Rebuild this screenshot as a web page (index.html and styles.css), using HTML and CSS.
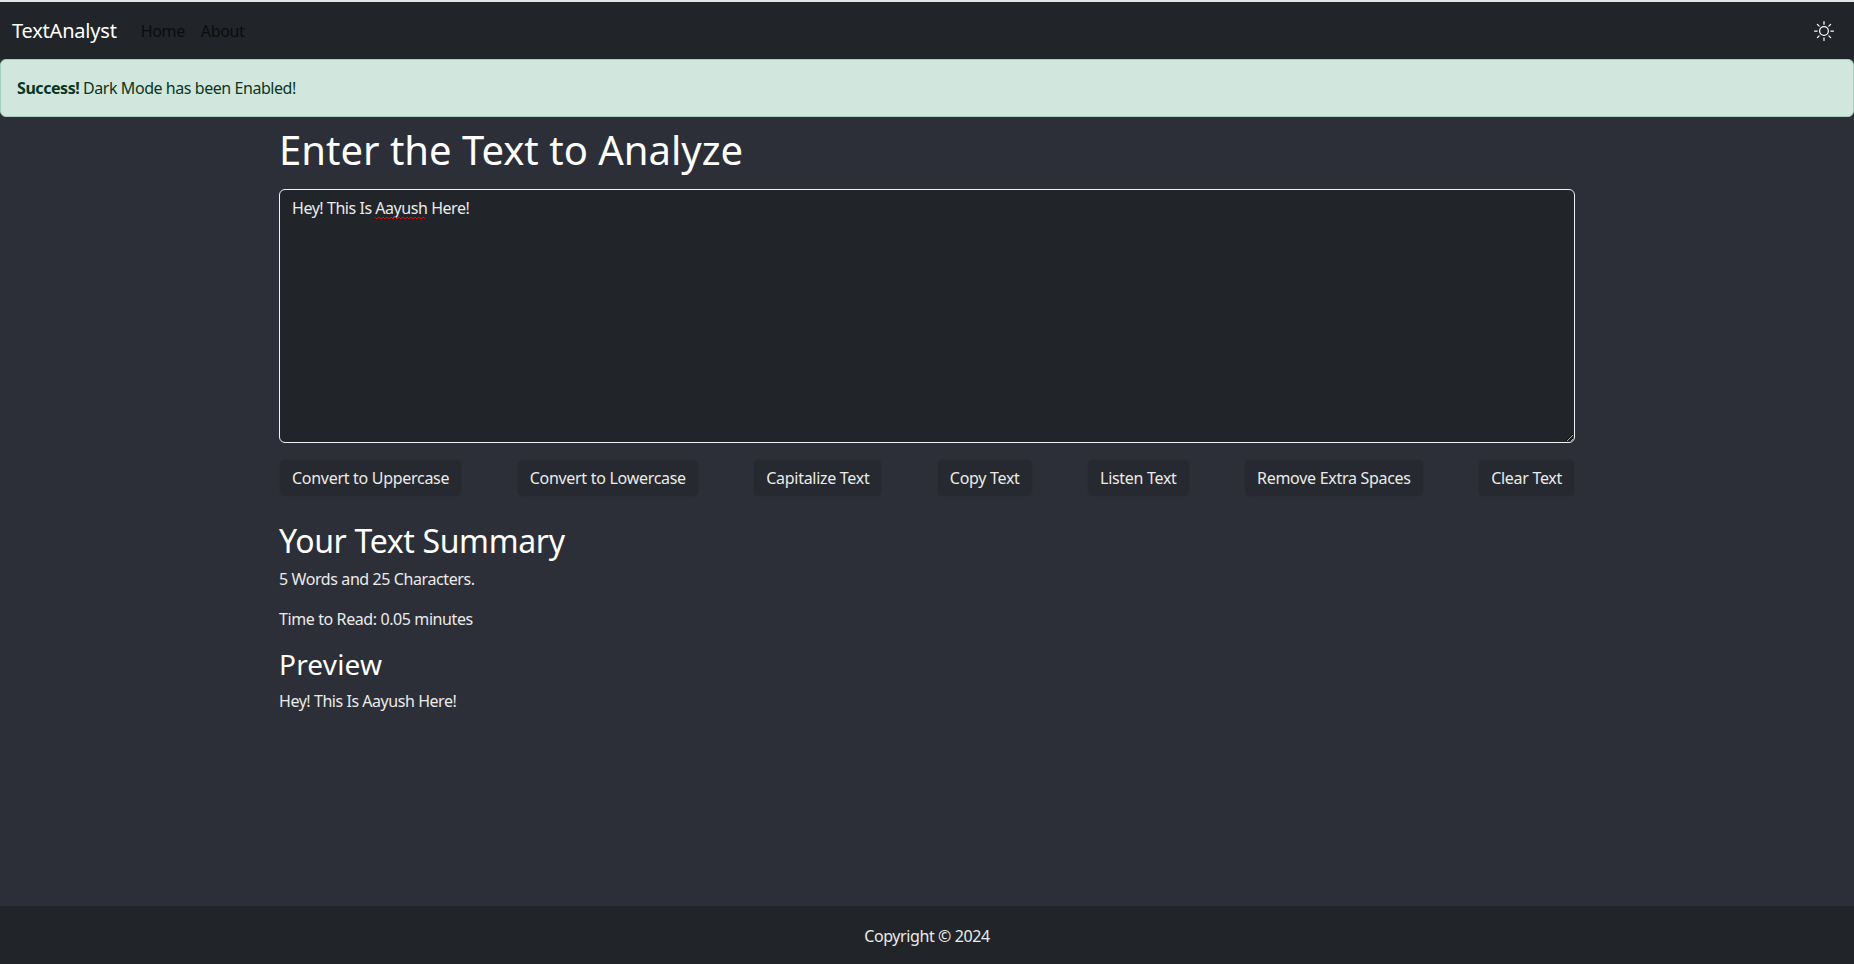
FILE: index.html
```html
<!DOCTYPE html>
<html lang="en">
<head>
<meta charset="UTF-8">
<meta name="viewport" content="width=device-width, initial-scale=1.0">
<title>TextAnalyst</title>
<link rel="stylesheet" href="styles.css">
</head>
<body>
    <nav class="navbar">
        <a class="brand" href="#">TextAnalyst</a>
        <a class="nav-link" href="#">Home</a>
        <a class="nav-link" href="#">About</a>
        <svg class="theme-icon" viewBox="0 0 16 16" fill="currentColor" aria-label="Toggle dark mode">
            <path d="M8 11a3 3 0 1 1 0-6 3 3 0 0 1 0 6zm0 1a4 4 0 1 0 0-8 4 4 0 0 0 0 8zM8 0a.5.5 0 0 1 .5.5v2a.5.5 0 0 1-1 0v-2A.5.5 0 0 1 8 0zm0 13a.5.5 0 0 1 .5.5v2a.5.5 0 0 1-1 0v-2A.5.5 0 0 1 8 13zm8-5a.5.5 0 0 1-.5.5h-2a.5.5 0 0 1 0-1h2a.5.5 0 0 1 .5.5zM3 8a.5.5 0 0 1-.5.5h-2a.5.5 0 0 1 0-1h2A.5.5 0 0 1 3 8zm10.657-5.657a.5.5 0 0 1 0 .707l-1.414 1.415a.5.5 0 1 1-.707-.708l1.414-1.414a.5.5 0 0 1 .707 0zm-9.193 9.193a.5.5 0 0 1 0 .707L3.05 13.657a.5.5 0 0 1-.707-.707l1.414-1.414a.5.5 0 0 1 .707 0zm9.193 2.121a.5.5 0 0 1-.707 0l-1.414-1.414a.5.5 0 0 1 .707-.707l1.414 1.414a.5.5 0 0 1 0 .707zM4.464 4.465a.5.5 0 0 1-.707 0L2.343 3.05a.5.5 0 1 1 .707-.707l1.414 1.414a.5.5 0 0 1 0 .708z"/>
        </svg>
    </nav>

    <div class="alert"><strong>Success!</strong> Dark Mode has been Enabled!</div>

    <main class="container">
        <h1>Enter the Text to Analyze</h1>
        <div class="text-box">
            <textarea rows="10" spellcheck="false">Hey! This Is Aayush Here!</textarea>
            <svg class="squiggle" width="52" height="4" viewBox="0 0 52 4" fill="none" stroke="#f00000" stroke-width="1">
                <path d="M0 1l2 2 2-2 2 2 2-2 2 2 2-2 2 2 2-2 2 2 2-2 2 2 2-2 2 2 2-2 2 2 2-2 2 2 2-2 2 2 2-2 2 2 2-2 2 2 2-2 2 2"/>
            </svg>
        </div>
        <div class="actions">
            <button>Convert to Uppercase</button>
            <button>Convert to Lowercase</button>
            <button>Capitalize Text</button>
            <button>Copy Text</button>
            <button>Listen Text</button>
            <button>Remove Extra Spaces</button>
            <button>Clear Text</button>
        </div>
        <h2>Your Text Summary</h2>
        <p>5 Words and 25 Characters.</p>
        <p>Time to Read: 0.05 minutes</p>
        <h3>Preview</h3>
        <p class="preview">Hey! This Is Aayush Here!</p>
    </main>

    <footer class="footer">Copyright © 2024</footer>
</body>
</html>
```

FILE: styles.css
```css
* {
    box-sizing: border-box;
}

body {
    font-family: "Noto Sans", sans-serif;
    font-size: 16px;
    line-height: 24px;
    letter-spacing: -0.4px;
    margin: 0;
    min-height: 100vh;
    display: flex;
    flex-direction: column;
    background-color: #2c2f38;
    color: #ebebeb;
    border-top: 2px solid #e4e4e4;
}

.navbar {
    display: flex;
    align-items: center;
    height: 57px;
    padding: 0 12px;
    background-color: #212529;
}

.brand {
    font-size: 20px;
    letter-spacing: -0.2px;
    color: #fff;
    text-decoration: none;
    margin-right: 16px;
}

.nav-link {
    color: #000;
    opacity: 0.65;
    text-decoration: none;
    letter-spacing: -0.35px;
    padding: 8px;
}

.theme-icon {
    width: 20px;
    height: 20px;
    margin-left: auto;
    margin-right: 8px;
    color: #fff;
}

.alert {
    height: 58px;
    padding: 16px;
    background-color: #d1e7dd;
    border: 1px solid #a3cfbb;
    border-radius: 6px;
    letter-spacing: -0.44px;
    color: #0a3622;
}

.container {
    width: 1320px;
    margin: 0 auto;
    padding: 0 12px;
    flex: 1;
}

h1 {
    font-size: 40px;
    font-weight: 400;
    line-height: 48px;
    letter-spacing: 0;
    margin: 9px 0 15px;
    color: #fff;
}

.text-box {
    position: relative;
}

textarea {
    display: block;
    width: 100%;
    padding: 6px 12px;
    font: inherit;
    letter-spacing: -0.45px;
    color: #ebebeb;
    background-color: #212529;
    border: 1px solid #f1f1f1;
    border-radius: 6px;
    outline: none;
}

.squiggle {
    position: absolute;
    left: 96px;
    top: 27px;
}

.actions {
    display: flex;
    justify-content: space-between;
    margin-top: 16px;
}

button {
    height: 38px;
    padding: 6px 12px;
    font: inherit;
    letter-spacing: -0.29px;
    color: #ebebeb;
    background-color: #26292f;
    border: 1px solid #2a2d33;
    border-radius: 6px;
}

h2 {
    font-size: 32px;
    font-weight: 400;
    line-height: 38px;
    letter-spacing: -0.35px;
    margin: 25px 0 7px;
    color: #fff;
}

h3 {
    font-size: 28px;
    font-weight: 400;
    line-height: 34px;
    letter-spacing: 0.2px;
    margin: 0 0 8px;
    color: #fff;
}

p {
    margin: 0 0 16px;
}

.preview {
    letter-spacing: -0.45px;
}

.footer {
    height: 58px;
    padding-top: 1px;
    display: flex;
    align-items: center;
    justify-content: center;
    background-color: #212529;
}
```
